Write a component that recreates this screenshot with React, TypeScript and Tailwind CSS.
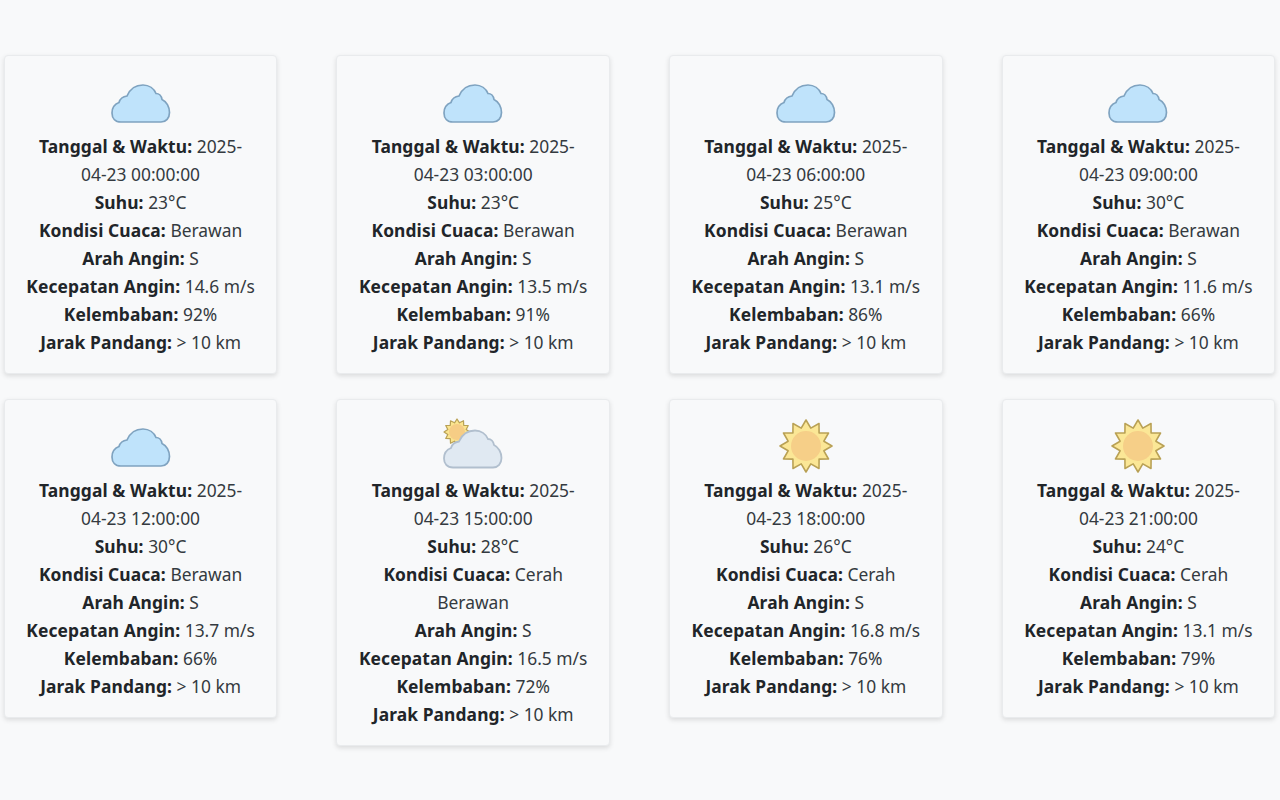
const cloudPath = "M12 50 C6 50 3 46 3 41 C3 36 6 32 10 30.500 C11 27 14 24.500 18 24 C21 17 27 13 34 13 C40 13 45 16.500 47 21.500 C50 21.500 52.500 24 53 27.500 C57.500 29.500 60.500 35 60.500 40.500 C60.500 46 57 50 52 50 Z";

function CloudIcon() {
  return (
    <svg viewBox="0 0 64 60" className="w-[64px] h-[60px]">
      <path d={cloudPath} fill="#bfe3fb" stroke="#7fa3c0" strokeWidth="1.7" />
    </svg>
  );
}

function sunPoints(cx: number, cy: number, outer: number, inner: number, n: number) {
  const pts: string[] = [];
  for (let i = 0; i < n * 2; i++) {
    const r = i % 2 === 0 ? outer : inner;
    const a = (Math.PI * i) / n - Math.PI / 2;
    pts.push(`${(cx + r * Math.cos(a)).toFixed(2)},${(cy + r * Math.sin(a)).toFixed(2)}`);
  }
  return pts.join(" ");
}

function SunIcon() {
  return (
    <svg viewBox="0 0 60 60" className="w-[60px] h-[60px]">
      <polygon points={sunPoints(30, 30, 26, 18.500, 12)} fill="#fbe796" stroke="#b9a155" strokeWidth="1.6" strokeLinejoin="round" />
      <circle cx="30" cy="30" r="15" fill="#f6cf88" />
    </svg>
  );
}

function PartlyIcon() {
  return (
    <svg viewBox="0 0 64 60" className="w-[64px] h-[60px]">
      <polygon points={sunPoints(16, 16, 13, 9.500, 12)} fill="#fbe58f" stroke="#b9a155" strokeWidth="1.2" strokeLinejoin="round" />
      <circle cx="16" cy="16" r="8" fill="#f6cd85" />
      <path d={cloudPath} transform="translate(0 1.500)" fill="#e0e9f2" stroke="#b1bfce" strokeWidth="1.8" />
    </svg>
  );
}

type Item = {
  icon: "cloud" | "partly" | "sun";
  hour: string;
  temp: string;
  cond: string;
  speed: string;
  hum: string;
};

const items: Item[] = [
  { icon: "cloud", hour: "00:00:00", temp: "23°C", cond: "Berawan", speed: "14.6 m/s", hum: "92%" },
  { icon: "cloud", hour: "03:00:00", temp: "23°C", cond: "Berawan", speed: "13.5 m/s", hum: "91%" },
  { icon: "cloud", hour: "06:00:00", temp: "25°C", cond: "Berawan", speed: "13.1 m/s", hum: "86%" },
  { icon: "cloud", hour: "09:00:00", temp: "30°C", cond: "Berawan", speed: "11.6 m/s", hum: "66%" },
  { icon: "cloud", hour: "12:00:00", temp: "30°C", cond: "Berawan", speed: "13.7 m/s", hum: "66%" },
  { icon: "partly", hour: "15:00:00", temp: "28°C", cond: "Cerah Berawan", speed: "16.5 m/s", hum: "72%" },
  { icon: "sun", hour: "18:00:00", temp: "26°C", cond: "Cerah", speed: "16.8 m/s", hum: "76%" },
  { icon: "sun", hour: "21:00:00", temp: "24°C", cond: "Cerah", speed: "13.1 m/s", hum: "79%" },
];

function Row({ label, children }: { label: string; children: React.ReactNode }) {
  return (
    <p>
      <strong className="font-bold tracking-[0.1px] text-[#212529]">{label}:</strong> {children}
    </p>
  );
}

function Card({ item }: { item: Item }) {
  return (
    <div className="rounded-[4px] border border-[#e9ebed] bg-[#f8f9fa] px-[20px] pt-[16px] pb-[17px] text-center shadow-[0_2px_5px_rgba(0,0,0,0.12)]">
      <div className="flex h-[60px] justify-center">
        {item.icon === "cloud" && <CloudIcon />}
        {item.icon === "partly" && <PartlyIcon />}
        {item.icon === "sun" && <SunIcon />}
      </div>
      <Row label="Tanggal & Waktu">
        2025-<span className="whitespace-nowrap">04-23</span> {item.hour}
      </Row>
      <Row label="Suhu">{item.temp}</Row>
      <Row label="Kondisi Cuaca">{item.cond}</Row>
      <Row label="Arah Angin">S</Row>
      <Row label="Kecepatan Angin">{item.speed}</Row>
      <Row label="Kelembaban">{item.hum}</Row>
      <Row label="Jarak Pandang">{"> 10 km"}</Row>
    </div>
  );
}

export default function App() {
  return (
    <div className="min-h-[800px] bg-[#f8f9fa] pl-[3.7px] pr-[4.7px] pt-[55px] font-['Noto_Sans',sans-serif] text-[17.4px] leading-[28px] text-[#343a40]">
      <div className="grid grid-cols-4 items-start gap-x-[58.8px] gap-y-[25px]">
        {items.map((item) => (
          <Card key={item.hour} item={item} />
        ))}
      </div>
    </div>
  );
}
